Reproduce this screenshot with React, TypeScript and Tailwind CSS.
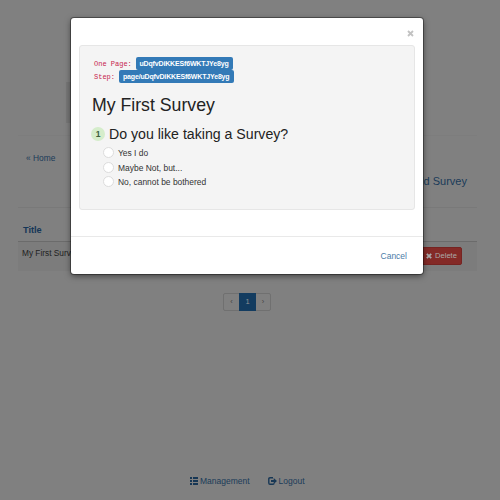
import React from "react";

const ids = [
  { label: "One Page:", value: "uDqfvDiKKESf6WKTJYe8yg", width: "w-[97px]" },
  { label: "Step:", value: "page/uDqfvDiKKESf6WKTJYe8yg", width: "w-[115px]" },
];
const answers = ["Yes I do", "Maybe Not, but...", "No, cannot be bothered"];

function ListIcon() {
  return (
    <svg width="8" height="8" viewBox="0 0 8 8" fill="#173755" className="block">
      <path d="M0 0h2v2H0zM3 0h5v2H3zM0 3h2v2H0zM3 3h5v2H3zM0 6h2v2H0zM3 6h5v2H3z" />
    </svg>
  );
}

function LogoutIcon() {
  return (
    <svg width="9" height="8" viewBox="0 0 9 8" className="block">
      <path d="M5 .8H2Q.8.8.8 2v4Q.8 7.2 2 7.2h3Q6 7.2 6 6.2" fill="none" stroke="#173755" strokeWidth="1.4" />
      <path d="M3 3h2.7V1L9 4 5.7 7V5H3z" fill="#173755" />
    </svg>
  );
}

export default function App() {
  return (
    <main className="relative h-[500px] w-[500px] overflow-hidden bg-[#808080] font-['Liberation_Sans',Arial,sans-serif] text-[8.2px] leading-[12px] text-[#333]">
      <div className="flex h-[500px] flex-col pl-[18px] pr-[23px]">
        <div className="ml-[48px] mt-[82px] h-[41px] w-[340px] shrink-0 bg-[#777]" />
        <div className="mt-[12px] h-px shrink-0 bg-[#7d7d7d]" />
        <a className="ml-[8px] mt-[16px] h-[12px] shrink-0 text-[8.4px] text-[#1a3b59]">« Home</a>
        <a className="mr-[10px] mt-[8px] h-[18px] shrink-0 text-right text-[11px] leading-[18px] text-[#1a3b59]">Add Survey</a>
        <div className="mt-[17px] h-px shrink-0 bg-[#797979]" />
        <div className="h-[34px] shrink-0 border-b border-[#6b6b6b] pl-[5px] pt-[16px] text-[9.2px] font-bold leading-[12px] text-[#153657]">Title</div>
        <div className="flex h-[29px] shrink-0 justify-between bg-[#7c7c7c] pl-[4px] pr-[15px] pt-[5px]">
          <span className="text-[8.3px] leading-[12px] text-[#222]">My First Survey</span>
          <button className="flex h-[18px] w-[46px] items-center gap-[3px] rounded-[2px] border border-[#762422] bg-[#842a27] pl-[9px] text-[7.6px] leading-[16px] text-[#aaa]">
            <svg width="6" height="6" viewBox="0 0 6 6" className="block shrink-0"><path d="m.8.8 4.4 4.4M5.2.8.8 5.2" stroke="#aaa" strokeWidth="1.8" /></svg>
            Delete
          </button>
        </div>
        <nav className="ml-[205px] mt-[22px] flex h-[18px] w-[48px] shrink-0 rounded-[2px] border border-[#707070] text-center text-[7.5px] leading-[16px] text-[#444]">
          <span className="w-[15px]">‹</span>
          <span className="-my-px h-[18px] w-[17px] bg-[#133c60] leading-[18px] text-[#929292]">1</span>
          <span className="w-[14px]">›</span>
        </nav>
        <footer className="ml-[172px] mt-[164px] flex h-[12px] shrink-0 items-center text-[8.5px] text-[#1a3b59]">
          <ListIcon /><span className="ml-[2px] w-[68px]">Management</span>
          <LogoutIcon /><span className="ml-[1.5px]">Logout</span>
        </footer>
      </div>

      <section role="dialog" className="absolute left-[71px] top-[18px] flex h-[256px] w-[352px] flex-col rounded-[3px] bg-white shadow-[0_2px_6px_rgba(0,0,0,.5),0_0_0_1px_rgba(0,0,0,.35)]">
        <button className="mr-[8px] flex h-[27px] shrink-0 items-start justify-end pt-[12px]">
          <svg width="7" height="7" viewBox="0 0 7 7" className="mr-px block"><path d="m1 1 5 5M6 1 1 6" stroke="#c2c2c2" strokeWidth="1.8" /></svg>
        </button>
        <div className="ml-[8px] h-[165px] w-[336px] shrink-0 rounded-[3px] border border-[#e6e6e6] bg-[#f4f4f4] pl-[12px] pt-[11px]">
          {ids.map((item) => (
            <div key={item.label} className="flex h-[13px] items-center pl-[2px]">
              <span className="whitespace-pre pt-[2px] font-['Liberation_Mono',monospace] text-[7px] leading-[11px] text-[#c7254e]">{item.label} </span>
              <span className={`${item.width} -ml-[0.5px] flex h-[13px] shrink-0 items-center justify-center whitespace-nowrap rounded-[2px] bg-[#337ab7] text-[7px] font-bold leading-[13px] tracking-[-0.16px] text-white`}>
                {item.value}
              </span>
            </div>
          ))}
          <h1 className="mt-[11px] text-[17.7px] leading-[22px] text-[#222]">My First Survey</h1>
          <div className="-ml-px mt-[10px] flex h-[16px] items-center">
            <span className="flex h-[14px] w-[14px] items-center justify-center rounded-full bg-[#d5edcb] text-[8.5px] font-bold leading-[14px] text-[#3c603d]">1</span>
            <h2 className="ml-[4px] whitespace-nowrap text-[14.15px] leading-[16px] text-[#222]">Do you like taking a Survey?</h2>
          </div>
          <div className="mt-[3px] pl-[11px]">
            {answers.map((answer) => (
              <label key={answer} className="flex h-[14.7px] items-center">
                <span className="h-[11px] w-[11px] rounded-full border border-[#dcdcdc] bg-white" />
                <span className="ml-[4px] pt-px text-[8.45px]">{answer}</span>
              </label>
            ))}
          </div>
        </div>
        <footer className="mt-[26px] flex h-[38px] shrink-0 items-center justify-end border-t border-[#e9e9e9] pr-[16px]">
          <button className="text-[8.5px] text-[#4b7ba7]">Cancel</button>
        </footer>
      </section>
    </main>
  );
}
